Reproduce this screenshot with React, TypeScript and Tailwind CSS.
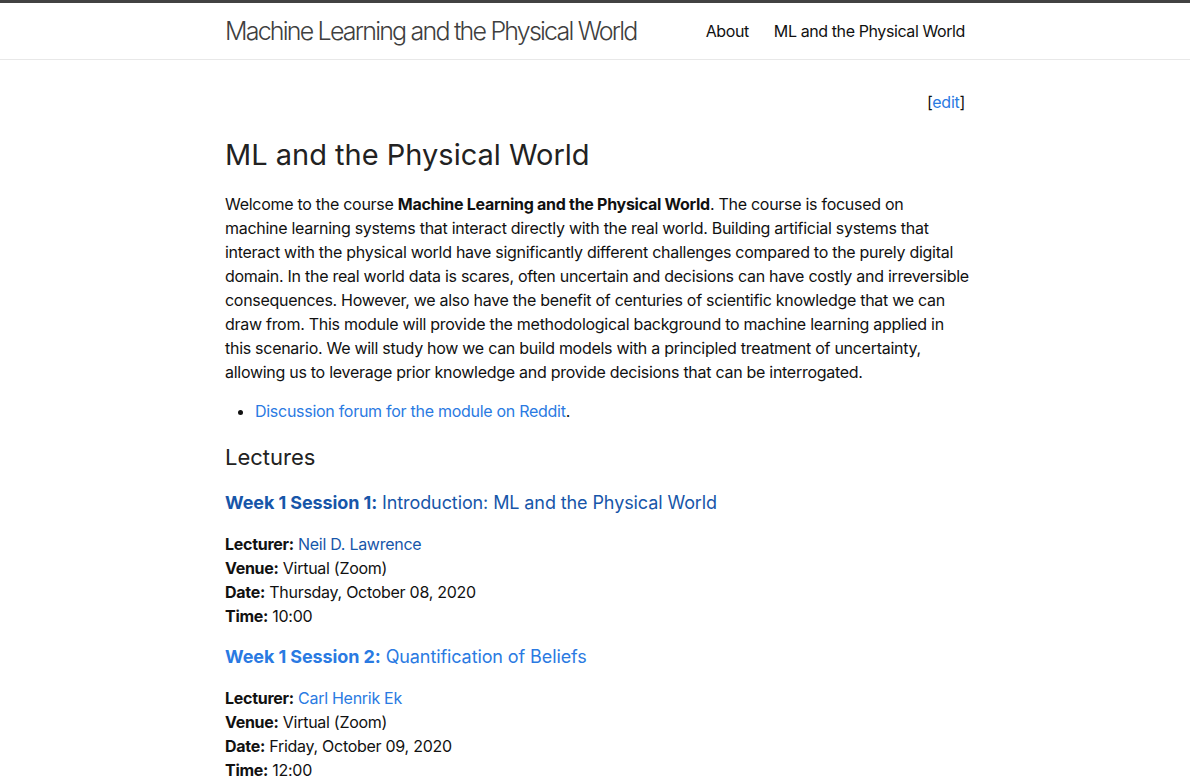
import React from "react";

const font = { fontFamily: 'Inter, "Noto Sans", "Liberation Sans", sans-serif' };

function Session({
  title,
  subtitle,
  lecturer,
  date,
  time,
  visited,
}: {
  title: string;
  subtitle: string;
  lecturer: string;
  date: string;
  time: string;
  visited?: boolean;
}) {
  const c = visited ? "text-[#1756a9]" : "text-[#2a7ae2]";
  return (
    <div>
      <h3 className={`text-[18px] leading-[24px] tracking-[-0.1px] mb-[17px] ${c}`}>
        <a href="#" className={c}>
          <span className="font-bold">{title}</span> {subtitle}
        </a>
      </h3>
      <p className="mb-[17px]">
        <span className="font-bold">Lecturer:</span>{" "}
        <a href="#" className={c}>
          {lecturer}
        </a>
        <br />
        <span className="font-bold">Venue:</span> Virtual (Zoom)
        <br />
        <span className="font-bold">Date:</span> {date}
        <br />
        <span className="font-bold">Time:</span> {time}
      </p>
    </div>
  );
}

export default function App() {
  return (
    <div
      className="min-h-screen bg-white text-[#111] text-[16px] leading-[24px] tracking-[-0.28px]"
      style={font}
    >
      <header className="border-t-[3px] border-t-[#424242] border-b border-b-[#e8e8e8]">
        <div className="max-w-[800px] mx-auto px-[30px] flex items-center justify-between h-[56px]">
          <a href="#" className="text-[25px] font-light tracking-[-1.8px] leading-[56px] text-[#3f3f3f]">
            Machine Learning and the Physical World
          </a>
          <nav className="flex gap-[25px] leading-[56px] tracking-[-0.4px] text-[#111]">
            <a href="#">About</a>
            <a href="#">ML and the Physical World</a>
          </nav>
        </div>
      </header>
      <main className="max-w-[800px] mx-auto px-[30px] pt-[30px]">
        <p className="text-right mb-[21px]">
          [<a href="#" className="text-[#2a7ae2]">edit</a>]
        </p>
        <h1 className="text-[29px] leading-[40px] tracking-normal text-[#222] mb-[17px]">ML and the Physical World</h1>
        <p className="mb-[15px] whitespace-nowrap">
          Welcome to the course <strong className="font-bold">Machine Learning and the Physical World</strong>. The
          course is focused on
          <br />
          machine learning systems that interact directly with the real world. Building artificial systems that
          <br />
          interact with the physical world have significantly different challenges compared to the purely digital
          <br />
          domain. In the real world data is scares, often uncertain and decisions can have costly and irreversible
          <br />
          consequences. However, we also have the benefit of centuries of scientific knowledge that we can
          <br />
          draw from. This module will provide the methodological background to machine learning applied in
          <br />
          this scenario. We will study how we can build models with a principled treatment of uncertainty,
          <br />
          allowing us to leverage prior knowledge and provide decisions that can be interrogated.
        </p>
        <ul className="list-disc ml-[30px] mb-[20px]">
          <li>
            <a href="#" className="text-[#2a7ae2]">
              Discussion forum for the module on Reddit
            </a>
            .
          </li>
        </ul>
        <h2 className="text-[22px] leading-[28px] tracking-normal text-[#222] mb-[20px]">Lectures</h2>
        <Session
          title="Week 1 Session 1:"
          subtitle="Introduction: ML and the Physical World"
          lecturer="Neil D. Lawrence"
          date="Thursday, October 08, 2020"
          time="10:00"
          visited
        />
        <Session
          title="Week 1 Session 2:"
          subtitle="Quantification of Beliefs"
          lecturer="Carl Henrik Ek"
          date="Friday, October 09, 2020"
          time="12:00"
        />
      </main>
    </div>
  );
}
